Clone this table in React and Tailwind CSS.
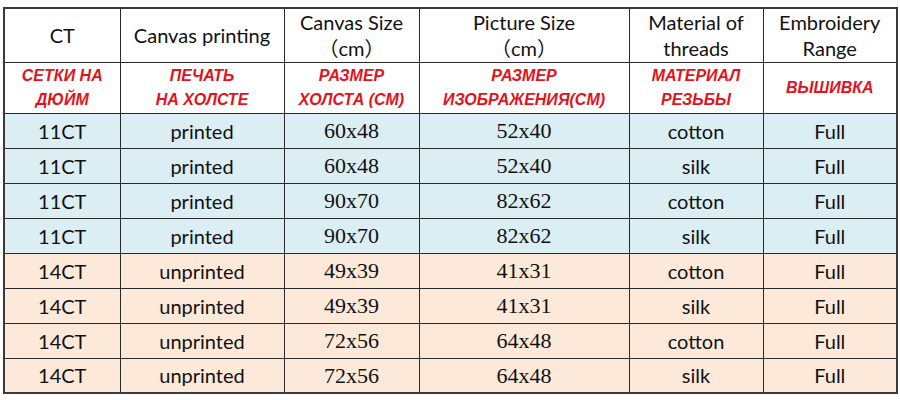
import React from 'react';

const COLS = ['w-[116px]', 'w-[164px]', 'w-[135px]', 'w-[210px]', 'w-[134px]', 'w-[134px]'];

const HEAD = [
    ['CT'],
    ['Canvas printing'],
    ['Canvas Size', '（cm）'],
    ['Picture Size', '（cm）'],
    ['Material of', 'threads'],
    ['Embroidery', 'Range'],
];

const RU = [
    ['СЕТКИ НА', 'ДЮЙМ'],
    ['ПЕЧАТЬ', 'НА ХОЛСТЕ'],
    ['РАЗМЕР', 'ХОЛСТА (СМ)'],
    ['РАЗМЕР', 'ИЗОБРАЖЕНИЯ(СМ)'],
    ['МАТЕРИАЛ', 'РЕЗЬБЫ'],
    ['ВЫШИВКА'],
];

const ROWS = [
    ['11CT', 'printed', '60x48', '52x40', 'cotton'],
    ['11CT', 'printed', '60x48', '52x40', 'silk'],
    ['11CT', 'printed', '90x70', '82x62', 'cotton'],
    ['11CT', 'printed', '90x70', '82x62', 'silk'],
    ['14CT', 'unprinted', '49x39', '41x31', 'cotton'],
    ['14CT', 'unprinted', '49x39', '41x31', 'silk'],
    ['14CT', 'unprinted', '72x56', '64x48', 'cotton'],
    ['14CT', 'unprinted', '72x56', '64x48', 'silk'],
];

const sans = "font-['Lato','Noto_Sans_CJK_SC',sans-serif]";
const serif = "font-['Liberation_Serif','Times_New_Roman',serif]";

export default function App() {
    return (
        <div className="w-[900px] h-[400px] bg-white pl-[3px] pt-[7px]">
            <table className="table-fixed border-collapse border-2 border-[#3a3a3a] text-[#111]">
                <colgroup>
                    {COLS.map((c, i) => <col key={i} className={c} />)}
                </colgroup>
                <tbody>
                    {/* English header */}
                    <tr className="h-[54px]">
                        {HEAD.map((lines, i) => (
                            <td key={i} className={`border border-[#2a2a2a] text-center align-middle text-[20px] leading-[26px] ${sans}`}>
                                {lines.map((l, j) => <div key={j}>{l}</div>)}
                            </td>
                        ))}
                    </tr>
                    {/* Russian header */}
                    <tr className="h-[51px]">
                        {RU.map((lines, i) => (
                            <td key={i} className="border border-[#2a2a2a] text-center align-middle text-[16px] leading-[24px] font-bold italic text-[#e3121b] font-['Liberation_Sans',Arial,sans-serif]">
                                {lines.map((l, j) => <div key={j}>{l}</div>)}
                            </td>
                        ))}
                    </tr>
                    {ROWS.map((r, i) => (
                        <tr key={i} className={`h-[35px] ${i < 4 ? 'bg-[#daeef3]' : 'bg-[#fde9d9]'}`}>
                            <td className={`border border-[#2a2a2a] text-center text-[20px] ${sans}`}>{r[0]}</td>
                            <td className={`border border-[#2a2a2a] text-center text-[20px] ${sans}`}>{r[1]}</td>
                            <td className={`border border-[#2a2a2a] text-center text-[22px] ${serif}`}>{r[2]}</td>
                            <td className={`border border-[#2a2a2a] text-center text-[22px] ${serif}`}>{r[3]}</td>
                            <td className={`border border-[#2a2a2a] text-center text-[20px] ${sans}`}>{r[4]}</td>
                            <td className={`border border-[#2a2a2a] text-center text-[20px] ${sans}`}>Full</td>
                        </tr>
                    ))}
                </tbody>
            </table>
        </div>
    );
}
